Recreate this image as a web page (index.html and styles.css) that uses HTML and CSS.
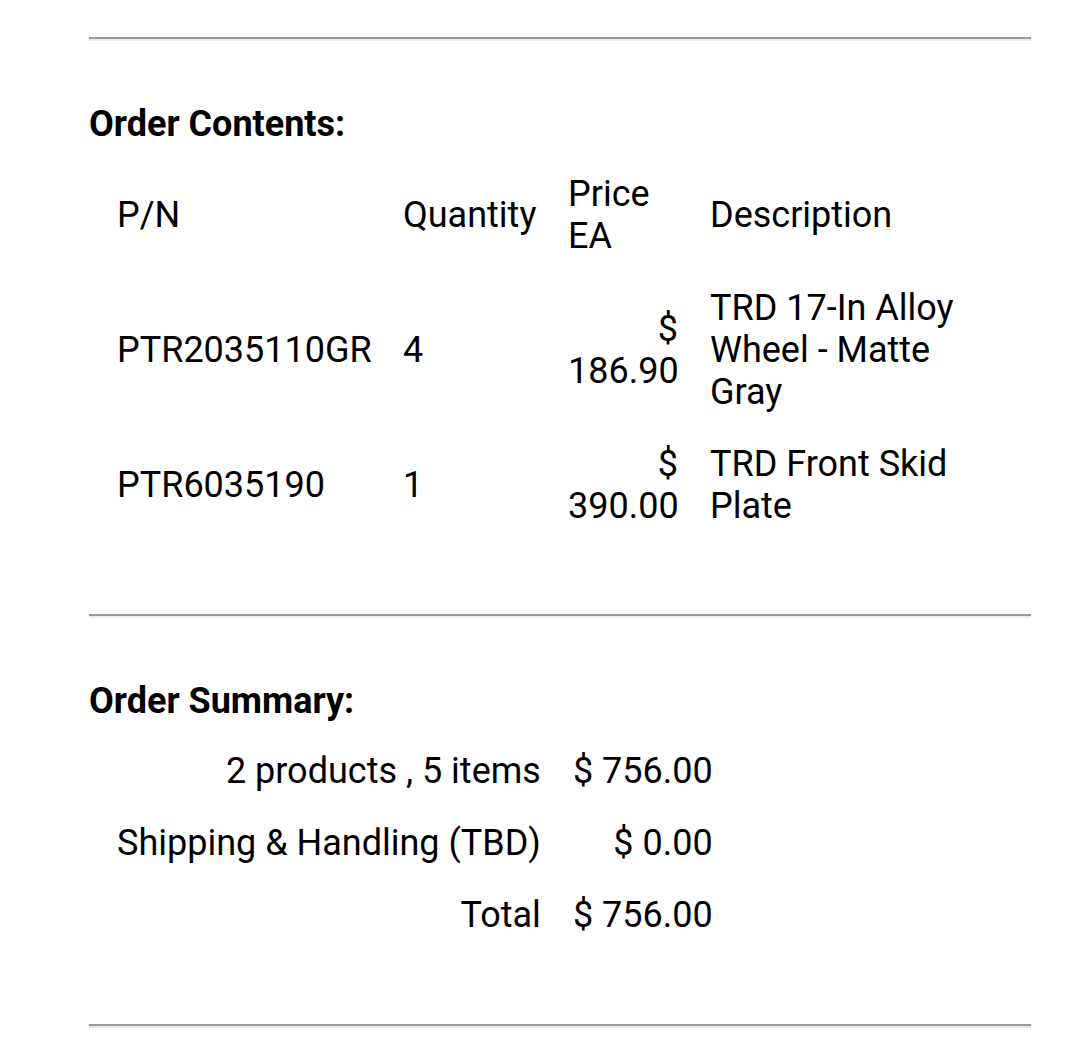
FILE: index.html
```html
<!DOCTYPE html>
<html lang="en">
<head>
  <meta charset="UTF-8">
  <meta name="viewport" content="width=device-width, initial-scale=1">
  <title>Order Confirmation</title>
  <link rel="stylesheet" href="styles.css">
</head>
<body>

  <hr class="rule">

  <!-- CONTENIDO DEL PEDIDO -->
  <h2 class="section-title">Order Contents:</h2>
  <table class="order-table contents">
    <thead>
      <tr>
        <th class="col-pn">P/N</th>
        <th class="col-qty">Quantity</th>
        <th class="col-price">Price EA</th>
        <th class="col-desc">Description</th>
      </tr>
    </thead>
    <tbody>
      <tr>
        <td>PTR2035110GR</td>
        <td>4</td>
        <td class="num">$ 186.90</td>
        <td>TRD 17-In Alloy Wheel - Matte Gray</td>
      </tr>
      <tr>
        <td>PTR6035190</td>
        <td>1</td>
        <td class="num">$ 390.00</td>
        <td>TRD Front Skid Plate</td>
      </tr>
    </tbody>
  </table>

  <hr class="rule">

  <!-- RESUMEN -->
  <h2 class="section-title">Order Summary:</h2>
  <table class="order-table summary">
    <tr>
      <td class="num">2 products , 5 items</td>
      <td class="num">$ 756.00</td>
    </tr>
    <tr>
      <td class="num">Shipping &amp; Handling (TBD)</td>
      <td class="num">$ 0.00</td>
    </tr>
    <tr>
      <td class="num">Total</td>
      <td class="num">$ 756.00</td>
    </tr>
  </table>

  <hr class="rule">

</body>
</html>
```

FILE: styles.css
```css
/* GENERAL */
* { box-sizing: border-box; }
body {
  margin: 0; padding: 37px 49px 0 89px;
  font-family: Roboto, "Liberation Sans", Arial, sans-serif;
  font-size: 36px; line-height: 42px;
  color: #000; background: #fff;
}

/* SEPARADORES */
.rule {
  margin: 0; height: 0;
  border: 0;
  border-top: 2px solid #9a9a9a;
  border-bottom: 2px solid #ececec;
}

/* TITULOS */
.section-title {
  margin: 62px 0 12px;
  font-size: 36px; line-height: 42px; font-weight: 700;
}

/* TABLAS */
.order-table {
  border-spacing: 2px;
  margin: 0 0 71px 11px;
}
.order-table th,
.order-table td {
  padding: 14px 15px;
  font-weight: 400; text-align: left;
  vertical-align: middle;
}
.order-table .num { text-align: right; }

.contents { table-layout: fixed; width: 897px; }
.col-pn { width: 284px; }
.col-qty { width: 163px; }
.col-price { width: 140px; }
.col-desc { width: 300px; }

.summary { margin-bottom: 72px; }
```
